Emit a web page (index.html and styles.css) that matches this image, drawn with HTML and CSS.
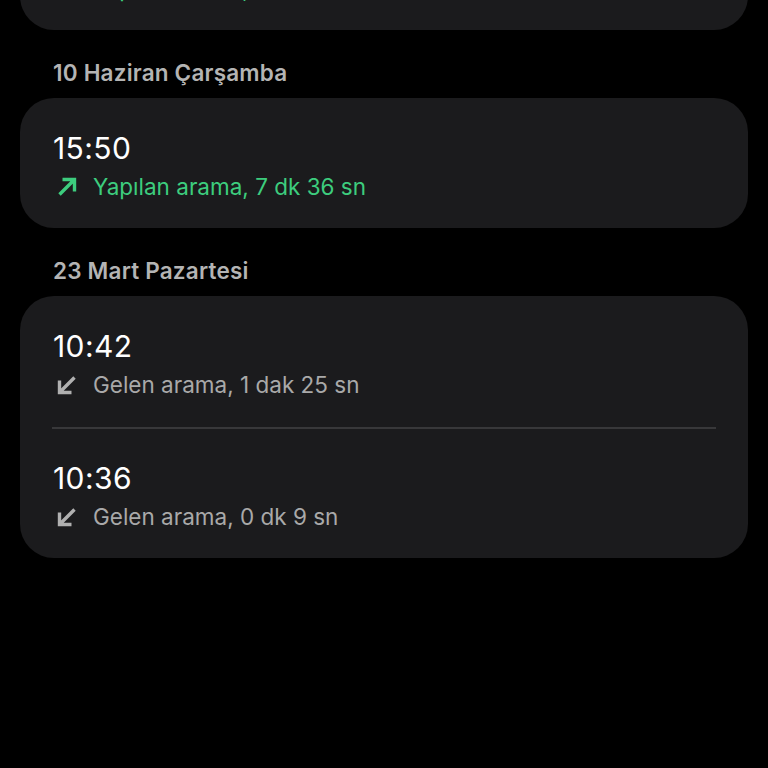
FILE: index.html
```html
<!DOCTYPE html>
<html lang="tr">
<head>
    <meta charset="UTF-8">
    <meta name="viewport" content="width=device-width, initial-scale=1.0">
    <title>Arama geçmişi</title>
    <link rel="stylesheet" href="styles.css">
</head>
<body>

<div class="log">

    <!-- Previous day, scrolled mostly out of view -->
    <div class="card card-top">
        <div class="call">
            <div class="time">17:08</div>
            <div class="info out">
                <svg class="icon" viewBox="0 0 24 24"><path d="M7.5 4.5h12v12M19.5 4.5L4.5 19.5"/></svg>
                <span>Yapılan arama, 2 dk 14 sn</span>
            </div>
        </div>
    </div>

    <h3 class="day">10 Haziran Çarşamba</h3>
    <div class="card">
        <div class="call">
            <div class="time">15:50</div>
            <div class="info out">
                <svg class="icon" viewBox="0 0 24 24"><path d="M7.5 4.5h12v12M19.5 4.5L4.5 19.5"/></svg>
                <span>Yapılan arama, 7 dk 36 sn</span>
            </div>
        </div>
    </div>

    <h3 class="day">23 Mart Pazartesi</h3>
    <div class="card">
        <div class="call">
            <div class="time">10:42</div>
            <div class="info in">
                <svg class="icon" viewBox="0 0 24 24"><path d="M16.5 19.5h-12v-12M4.5 19.5L19.5 4.5"/></svg>
                <span>Gelen arama, 1 dak 25 sn</span>
            </div>
        </div>
        <div class="divider"></div>
        <div class="call">
            <div class="time">10:36</div>
            <div class="info in">
                <svg class="icon" viewBox="0 0 24 24"><path d="M16.5 19.5h-12v-12M4.5 19.5L19.5 4.5"/></svg>
                <span>Gelen arama, 0 dk 9 sn</span>
            </div>
        </div>
    </div>

</div>

</body>
</html>
```

FILE: styles.css
```css
body {
    margin: 0;
    background-color: #000;
    font-family: Inter, Roboto, "Noto Sans", sans-serif;
    color: #fff;
}

.log {
    padding: 0 20px;
}

.card {
    background-color: #1b1b1d;
    border-radius: 34px;
    padding: 0 32px 0 33px;
}

.card-top {
    margin-top: -100px;
}

.call {
    padding: 33px 0 27px;
}

.divider + .call {
    padding-top: 32px;
}

.time {
    font-size: 30px;
    line-height: 34px;
    letter-spacing: 0.4px;
    margin-bottom: 8px;
}

.info {
    display: flex;
    align-items: center;
    font-size: 22.5px;
    line-height: 28px;
}

.info.out {
    color: #3dcd7e;
}

.info.in {
    color: #a9a9a9;
}

.icon {
    width: 24px;
    height: 24px;
    margin-left: 2px;
    margin-right: 14px;
    fill: none;
    stroke: currentColor;
    stroke-width: 3.4;
}

.info.in .icon {
    stroke: #b0b0b0;
}

.divider {
    height: 2px;
    margin-top: 1px;
    background-color: #38383a;
    margin-left: -1px;
}

.day {
    margin: 0;
    padding: 30px 33px 12px;
    font-size: 22.5px;
    line-height: 26px;
    letter-spacing: 0.2px;
    font-weight: 600;
    color: #b4b4b4;
}
```
